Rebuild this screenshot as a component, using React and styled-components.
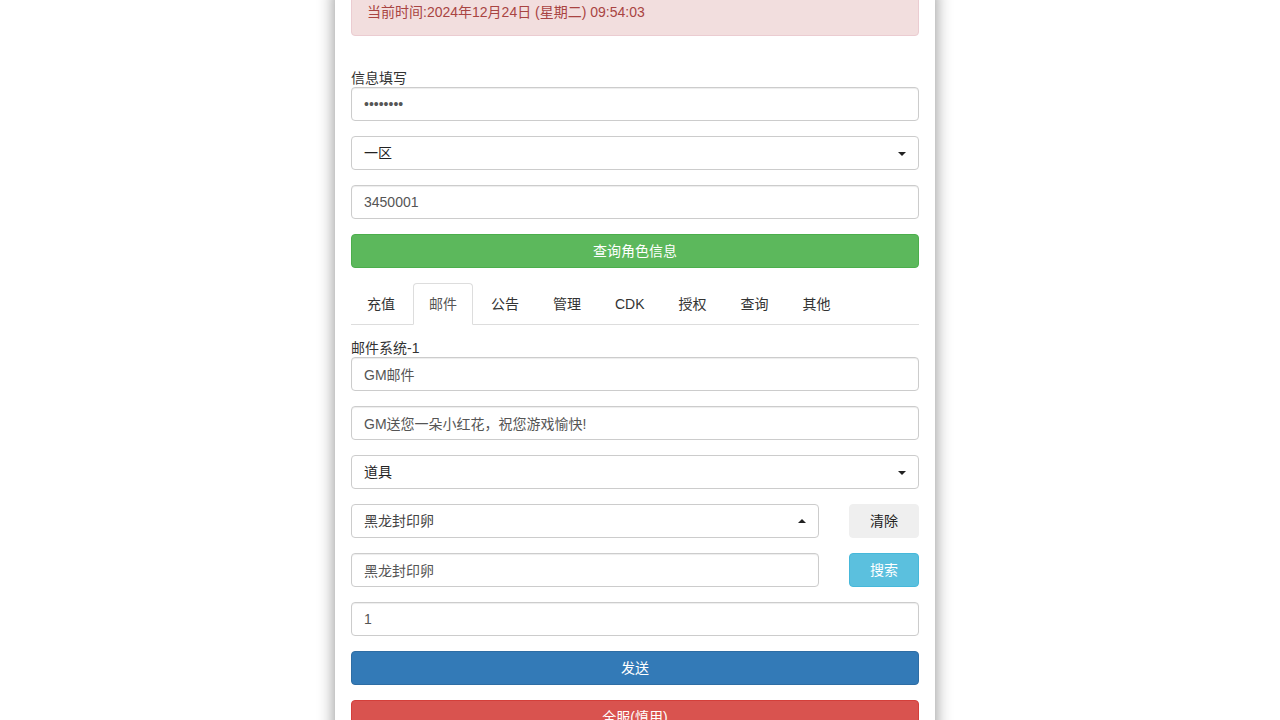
import React from "react";
import styled, { createGlobalStyle } from "styled-components";

const Global = createGlobalStyle`
  html, body { margin: 0; padding: 0; background: #fff; overflow: hidden; }
  body {
    font-family: "Liberation Sans", Arial, "Noto Sans CJK SC", sans-serif;
    font-size: 14px;
    line-height: 20px;
    color: #333;
  }
  * { box-sizing: border-box; }
`;

const Panel = styled.div`
  width: 600px;
  margin-left: calc(50% - 305px);
  min-height: 760px;
  padding: 0 16px;
  background: #fff;
  box-shadow: 0 0 16px rgba(0, 0, 0, 0.45);
`;

const Alert = styled.div`
  margin-top: -13px;
  padding: 14px 15px 13px;
  background: #f2dede;
  border: 1px solid #ebccd1;
  border-radius: 4px;
  color: #a94442;
`;

const Stack = styled.div`
  display: flex;
  flex-direction: column;
  gap: 15px;
  margin-top: ${(p) => p.$top || 0}px;
`;

const Group = styled.div`
  display: flex;
  flex-direction: column;
`;

const Label = styled.label`
  display: block;
  line-height: 20px;
  height: 20px;
  padding-top: 1px;
  color: #333;
`;

const Input = styled.input`
  display: block;
  width: 100%;
  height: 34px;
  padding: 6px 12px;
  font: inherit;
  font-size: 14px;
  color: #555;
  background: #fff;
  border: 1px solid #ccc;
  border-radius: 4px;
  box-shadow: inset 0 1px 1px rgba(0, 0, 0, 0.075);
  outline: none;
`;

const Select = styled.div`
  position: relative;
  height: 34px;
  padding: 6px 12px;
  color: ${(p) => p.$color || "#222"};
  background: #fff;
  border: 1px solid #ccc;
  border-radius: 4px;
  &::after {
    content: "";
    position: absolute;
    right: 12px;
    border-left: 4px solid transparent;
    border-right: 4px solid transparent;
    ${(p) =>
      p.$open
        ? "border-bottom: 4px solid #222; top: 14px;"
        : "border-top: 4px solid #222; top: 15px;"}
  }
`;

const Button = styled.button`
  display: block;
  width: 100%;
  height: 34px;
  padding: 6px 12px;
  font: inherit;
  font-size: 14px;
  color: ${(p) => p.$fg || "#fff"};
  background: ${(p) => p.$bg};
  border: 1px solid ${(p) => p.$border};
  border-radius: 4px;
  cursor: pointer;
`;

const Row = styled.div`
  display: grid;
  grid-template-columns: 1fr 70px;
  column-gap: 30px;
`;

const Tabs = styled.ul`
  display: flex;
  list-style: none;
  margin: 0;
  padding: 0;
  border-bottom: 1px solid #ddd;
`;

const Tab = styled.li`
  margin-right: 2px;
  margin-bottom: -1px;
  padding: 10px 15px;
  line-height: 20px;
  color: ${(p) => (p.$active ? "#555" : "#333")};
  background: ${(p) => (p.$active ? "#fff" : "transparent")};
  border: 1px solid ${(p) => (p.$active ? "#ddd" : "transparent")};
  border-bottom-color: ${(p) => (p.$active ? "#fff" : "transparent")};
  border-radius: 4px 4px 0 0;
`;

const tabs = ["充值", "邮件", "公告", "管理", "CDK", "授权", "查询", "其他"];

export default function App() {
  return (
    <>
      <Global />
      <Panel>
        <Alert>当前时间:2024年12月24日 (星期二) 09:54:03</Alert>
        <Stack $top={31}>
          <Group>
            <Label>信息填写</Label>
            <Input type="password" value="12345678" readOnly />
          </Group>
          <Select>一区</Select>
          <Input value="3450001" readOnly />
          <Button $bg="#5cb85c" $border="#4cae4c">查询角色信息</Button>
          <Tabs>
            {tabs.map((t) => (
              <Tab key={t} $active={t === "邮件"}>
                {t}
              </Tab>
            ))}
          </Tabs>
        </Stack>
        <Stack $top={12}>
          <Group>
            <Label>邮件系统-1</Label>
            <Input value="GM邮件" readOnly />
          </Group>
          <Input value="GM送您一朵小红花，祝您游戏愉快!" readOnly />
          <Select>道具</Select>
          <Row>
            <Select $open $color="#444">黑龙封印卵</Select>
            <Button $bg="#efefef" $border="#efefef" $fg="#222">清除</Button>
          </Row>
          <Row>
            <Input value="黑龙封印卵" readOnly />
            <Button $bg="#5bc0de" $border="#46b8da">搜索</Button>
          </Row>
          <Input value="1" readOnly />
          <Button $bg="#337ab7" $border="#2e6da4">发送</Button>
          <Button $bg="#d9534f" $border="#d43f3a">全服(慎用)</Button>
        </Stack>
      </Panel>
    </>
  );
}
